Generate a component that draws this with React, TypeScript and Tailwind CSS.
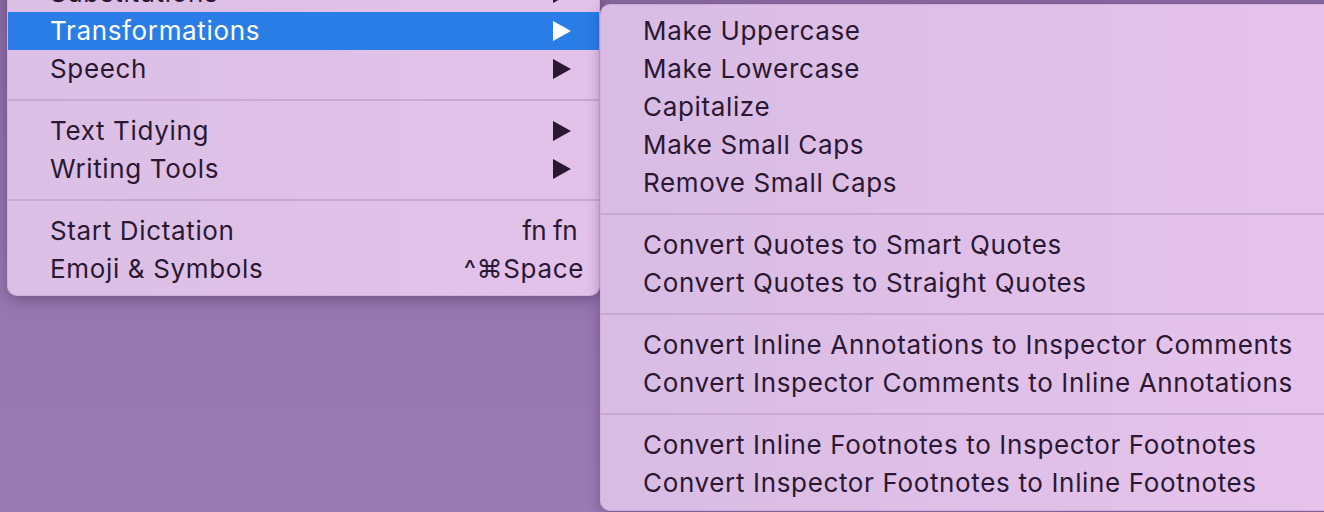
import React from 'react'

type Item =
  | { kind: 'item'; label: string; arrow?: boolean; shortcut?: string; active?: boolean }
  | { kind: 'sep' }

const mainItems: Item[] = [
  { kind: 'item', label: 'Substitutions', arrow: true },
  { kind: 'item', label: 'Transformations', arrow: true, active: true },
  { kind: 'item', label: 'Speech', arrow: true },
  { kind: 'sep' },
  { kind: 'item', label: 'Text Tidying', arrow: true },
  { kind: 'item', label: 'Writing Tools', arrow: true },
  { kind: 'sep' },
  { kind: 'item', label: 'Start Dictation', shortcut: 'fn fn' },
  { kind: 'item', label: 'Emoji & Symbols', shortcut: '^⌘Space' },
]

const subItems: Item[] = [
  { kind: 'item', label: 'Make Uppercase' },
  { kind: 'item', label: 'Make Lowercase' },
  { kind: 'item', label: 'Capitalize' },
  { kind: 'item', label: 'Make Small Caps' },
  { kind: 'item', label: 'Remove Small Caps' },
  { kind: 'sep' },
  { kind: 'item', label: 'Convert Quotes to Smart Quotes' },
  { kind: 'item', label: 'Convert Quotes to Straight Quotes' },
  { kind: 'sep' },
  { kind: 'item', label: 'Convert Inline Annotations to Inspector Comments' },
  { kind: 'item', label: 'Convert Inspector Comments to Inline Annotations' },
  { kind: 'sep' },
  { kind: 'item', label: 'Convert Inline Footnotes to Inspector Footnotes' },
  { kind: 'item', label: 'Convert Inspector Footnotes to Inline Footnotes' },
]

function Arrow({ active }: { active?: boolean }): React.JSX.Element {
  return (
    <svg width="18" height="20" viewBox="0 0 18 20" className="shrink-0">
      <path d="M0 0 L18 10 L0 20 Z" fill={active ? '#ffffff' : '#2a1833'} />
    </svg>
  )
}

function Row({ item }: { item: Item }): React.JSX.Element {
  if (item.kind === 'sep')
    return (
      <div className="h-[24px] flex items-center">
        <div className="w-full h-[2px] bg-[#c9a8d3]" />
      </div>
    )
  const base = 'h-[38px] flex items-center justify-between pl-[42px]'
  const color = item.active ? 'bg-[#2a7de6] text-white' : 'text-[#2a1833]'
  const pad = item.shortcut ? 'pr-[15px]' : 'pr-[28px]'
  return (
    <div className={`${base} ${color} ${pad}`}>
      <span className="whitespace-nowrap">{item.label}</span>
      {item.arrow && <Arrow active={item.active} />}
      {item.shortcut && (
        <span className={`whitespace-nowrap ${item.shortcut === 'fn fn' ? 'mr-[7px] tracking-[-0.5px]' : ''}`}>
          {item.shortcut}
        </span>
      )}
    </div>
  )
}

export default function App(): React.JSX.Element {
  return (
    <div
      className="w-[1324px] h-[512px] overflow-hidden flex items-start bg-gradient-to-b from-[#8a6aa1] via-[#9676ae] to-[#9b7bb4] text-[26px] leading-none tracking-[0.65px]"
      style={{ fontFamily: 'Inter, "Open Sans", sans-serif' }}>
      <div className="ml-[7px] mt-[-36px] w-[593px] shrink-0 pt-[9px] pb-[7px] rounded-[10px] bg-gradient-to-r from-[#dbbfe5] to-[#e3c2ea] shadow-[0_4px_14px_rgba(50,20,70,0.35)] border border-[#c7a7d2]/60">
        {mainItems.map((item, i) => (
          <Row key={i} item={item} />
        ))}
      </div>
      <div className="mt-[4px] w-[760px] shrink-0 pt-[7px] pb-[8px] rounded-[10px] bg-gradient-to-r from-[#d8bce3] to-[#e7c3ec] shadow-[0_4px_14px_rgba(50,20,70,0.35)] border border-[#c7a7d2]/70">
        {subItems.map((item, i) => (
          <Row key={i} item={item} />
        ))}
      </div>
    </div>
  )
}
